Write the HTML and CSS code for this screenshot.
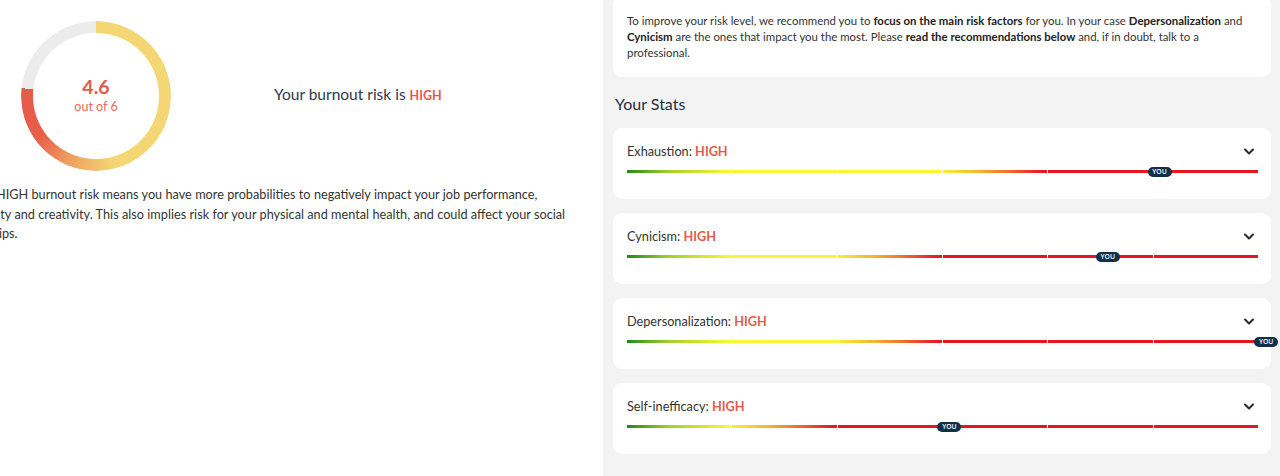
FILE: index.html
```html
<!DOCTYPE html>
<html lang="en">
<head>
<meta charset="utf-8">
<title>Burnout results</title>
<link rel="stylesheet" href="styles.css">
</head>
<body>
<div class="page">
  <section class="left">
    <div class="left-inner">
      <div class="summary">
        <div class="donut">
          <div class="donut-ring"></div>
          <div class="donut-label">
            <span class="score">4.6</span>
            <span class="outof">out of 6</span>
          </div>
        </div>
        <h2 class="risk-title">Your burnout risk is <span class="risk-high">HIGH</span></h2>
      </div>
      <p class="explain">Having a HIGH burnout risk means you have more probabilities to negatively impact your job performance, productivity and creativity. This also implies risk for your physical and mental health, and could affect your social relationships.</p>
    </div>
  </section>

  <section class="right">
    <div class="card intro">
      <p>To improve your risk level, we recommend you to <b>focus on the main risk factors</b> for you. In your case <b>Depersonalization</b> and <b>Cynicism</b> are the ones that impact you the most. Please <b>read the recommendations below</b> and, if in doubt, talk to a professional.</p>
    </div>

    <h3 class="section-title">Your Stats</h3>

    <div class="card stat">
      <div class="stat-head">
        <span class="stat-name">Exhaustion: <b class="lvl">HIGH</b></span>
        <svg class="chev" viewBox="0 0 10 7" width="10" height="7"><polyline points="1,1.5 5,5.5 9,1.5"/></svg>
      </div>
      <div class="bar">
        <span class="seg g2y"></span><span class="seg yel"></span><span class="seg yel"></span><span class="seg y2r"></span><span class="seg red"></span><span class="seg red"></span>
        <span class="you" style="left:84.4%">YOU</span>
      </div>
    </div>

    <div class="card stat">
      <div class="stat-head">
        <span class="stat-name">Cynicism: <b class="lvl">HIGH</b></span>
        <svg class="chev" viewBox="0 0 10 7" width="10" height="7"><polyline points="1,1.5 5,5.5 9,1.5"/></svg>
      </div>
      <div class="bar">
        <span class="seg g2y"></span><span class="seg yel"></span><span class="seg y2r"></span><span class="seg red"></span><span class="seg red"></span><span class="seg red"></span>
        <span class="you" style="left:76.2%">YOU</span>
      </div>
    </div>

    <div class="card stat">
      <div class="stat-head">
        <span class="stat-name">Depersonalization: <b class="lvl">HIGH</b></span>
        <svg class="chev" viewBox="0 0 10 7" width="10" height="7"><polyline points="1,1.5 5,5.5 9,1.5"/></svg>
      </div>
      <div class="bar">
        <span class="seg g2y"></span><span class="seg yel"></span><span class="seg y2r"></span><span class="seg red"></span><span class="seg red"></span><span class="seg red"></span>
        <span class="you" style="left:101.3%">YOU</span>
      </div>
    </div>

    <div class="card stat">
      <div class="stat-head">
        <span class="stat-name">Self-inefficacy: <b class="lvl">HIGH</b></span>
        <svg class="chev" viewBox="0 0 10 7" width="10" height="7"><polyline points="1,1.5 5,5.5 9,1.5"/></svg>
      </div>
      <div class="bar">
        <span class="seg g2y"></span><span class="seg y2r"></span><span class="seg red"></span><span class="seg red"></span><span class="seg red"></span><span class="seg red"></span>
        <span class="you" style="left:51.1%">YOU</span>
      </div>
    </div>

    <h3 class="section-title next">Your recommendations</h3>
  </section>
</div>
</body>
</html>
```
FILE: styles.css
```css
* { box-sizing: border-box; }
html, body { margin: 0; padding: 0; }
body {
  width: 1280px;
  height: 476px;
  overflow: hidden;
  background: #ffffff;
  font-family: Lato, "Open Sans", "Noto Sans", sans-serif;
  color: #333333;
}
.page {
  display: flex;
  width: 1280px;
  height: 476px;
}
.left {
  width: 603px;
  flex: none;
  overflow: hidden;
  background: #ffffff;
}
.left-inner {
  margin-left: -56px;
  width: 642px;
}
.summary {
  display: flex;
  align-items: center;
  padding: 21px 0 0 77px;
}
.donut {
  position: relative;
  width: 150px;
  height: 150px;
  flex: none;
}
.donut-ring {
  width: 150px;
  height: 150px;
  border-radius: 50%;
  background: conic-gradient(#f4d774 0deg, #f4d774 165deg, #ee9a5e 205deg, #e85c4a 235deg, #e55a49 276deg, #ececec 276deg, #ececec 360deg);
  -webkit-mask: radial-gradient(circle, transparent 62.5px, #000 63.5px);
  mask: radial-gradient(circle, transparent 62.5px, #000 63.5px);
}
.donut-label {
  position: absolute;
  inset: 0;
  display: flex;
  flex-direction: column;
  align-items: center;
  justify-content: center;
  padding-bottom: 1px;
}
.score {
  font-size: 19.5px;
  font-weight: 700;
  color: #e35a4c;
  line-height: 22px;
}
.outof {
  font-size: 12.5px;
  color: #e6695a;
  line-height: 18px;
}
.risk-title {
  margin: 0 0 4px 103px;
  font-size: 15.5px;
  font-weight: 400;
  color: #2c3a48;
}
.risk-high {
  font-size: 12.5px;
  font-weight: 700;
  color: #e35a4c;
}
.explain {
  margin: 14px 0 0 0;
  font-size: 12.7px;
  line-height: 19.5px;
  word-spacing: 0.1px;
  color: #333333;
}

.right {
  flex: 1;
  background: #f3f3f3;
  padding: 0 9px 0 10px;
  overflow: hidden;
}
.card {
  background: #ffffff;
  border-radius: 9px;
}
.intro {
  margin-top: -4px;
  padding: 17px 14px 16px 14px;
}
.intro p {
  margin: 0;
  font-size: 11.4px;
  line-height: 16px;
  color: #333333;
}
.intro b { color: #222222; }
.section-title {
  margin: 16px 0 13px 2px;
  font-size: 16px;
  line-height: 22px;
  font-weight: 400;
  color: #1f2d3a;
}
.section-title.next { margin-top: 16px; }
.stat {
  padding: 14px 13px 26px 14px;
  margin-bottom: 14px;
}
.stat-head {
  display: flex;
  align-items: center;
  justify-content: space-between;
  height: 18px;
}
.stat-name {
  font-size: 12.7px;
  color: #333333;
}
.lvl {
  color: #e35a4c;
  font-weight: 700;
}
.chev {
  margin-right: 4px;
  fill: none;
  stroke: #2b2b2b;
  stroke-width: 2;
  stroke-linecap: round;
  stroke-linejoin: round;
}
.bar {
  position: relative;
  display: flex;
  gap: 1px;
  height: 3px;
  margin-top: 10px;
}
.seg {
  flex: 1;
  height: 3px;
}
.g2y { background: linear-gradient(to right, #1f8a1c, #a3d02a 40%, #f5f534 95%); }
.yel { background: #f7f536; }
.y2r { background: linear-gradient(to right, #f6ee36, #f4b431 35%, #ef6a2a 65%, #e8242a 90%, #e5161e); }
.red { background: #e5161e; }
.you {
  position: absolute;
  top: 50%;
  transform: translate(-50%, -50%);
  width: 24px;
  height: 10px;
  border-radius: 5px;
  background: #10304a;
  color: #ffffff;
  font-family: "Open Sans", sans-serif;
  font-size: 6.8px;
  font-weight: 600;
  line-height: 10px;
  text-align: center;
}
```
